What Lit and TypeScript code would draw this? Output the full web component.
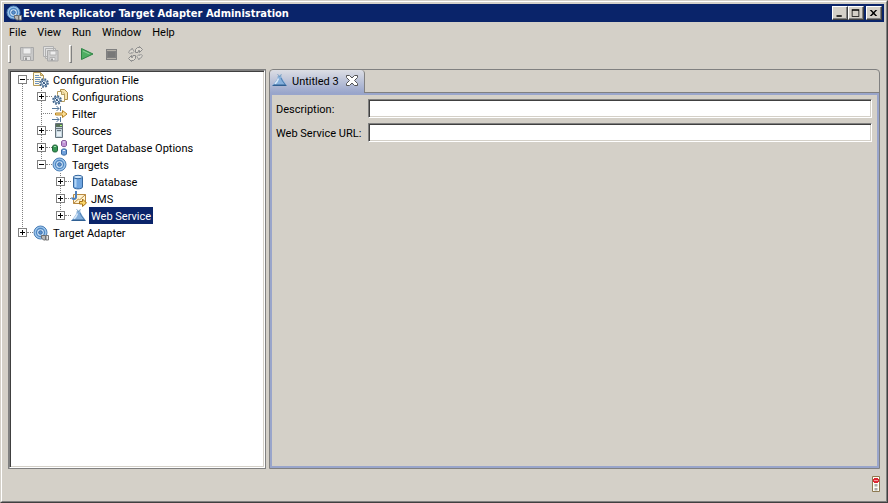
import { LitElement, html, css, svg } from 'lit';
import { customElement, state } from 'lit/decorators.js';
import { classMap } from 'lit/directives/class-map.js';

const target = svg`<circle cx="7.500" cy="7.500" r="6.500" fill="#9cc4ea" stroke="#4a7fb8"/><circle cx="7.500" cy="7.500" r="4" fill="#cfe4f8" stroke="#4d86c2" stroke-width="1.300"/><circle cx="7.500" cy="7.500" r="1.800" fill="#5b93cf" stroke="#3568a6"/>`;
const gear = svg`<g transform="translate(11 11)"><circle r="3.800" fill="#d5e4f2" stroke="#44668c" stroke-width="2" stroke-dasharray="1.700 1.280"/><circle r="2.800" fill="#e6f0f8" stroke="#6787a8"/><path d="M-2.500 -2.500L2.500 2.500M-1.500 1.500L1 -1.500" stroke="#2f5480"/></g>`;
const plug = svg`<path d="M8.500 10.500h4v4.500h-2l-2-2z" fill="#b8b8b8" stroke="#6c6c6c"/><path d="M13 10.500h2.500v4.500H13z" fill="#e4e4e4" stroke="#777"/>`;
const bell = svg`<path d="M5.500 1.500l2 1.500 2-1.500M5.500 4l4-1" fill="none" stroke="#6f9cc4"/><path d="M6 4h3.500l1.500 3 2.500 3.500 1.500 2.500H0L2 10.500 4.500 7z" fill="#86b0dc"/><path d="M6.500 5.500L5 8.500 3 11" fill="none" stroke="#d8e8f8" stroke-width="1.500"/><path d="M9 5l1.500 3 3 4" fill="none" stroke="#4c7db0"/><path d="M0 13l2-1.500h11l2 1.500z" fill="#2f5f92"/>`;

const icons: Record<string, unknown> = {
  app: svg`${target}${plug}`,
  adapter: svg`${target}${plug}`,
  target,
  bell,
  config: svg`<path d="M.5 .5h7l3 3v10H.5z" fill="#fffbe8" stroke="#b39a5c"/><path d="M7.500 .5v3h3z" fill="#f3d684" stroke="#b39a5c"/><path d="M2 3.500h4M2 5.500h6M2 7.500h5M2 9.500h4M2 11.500h4" stroke="#6d92bd"/>${gear}`,
  configs: svg`<path d="M8.500 .5h4l3 3v7h-7z" fill="#f8e4a8" stroke="#a98a48"/><path d="M5.500 5.500v-3h4.500l2.500 2.500v7.500h-7z" fill="#fffdf0" stroke="#b39a5c"/><path d="M9.500 2.500v3h3" fill="#f8e4a8" stroke="#b39a5c"/><g transform="translate(-6 0)">${gear}</g>`,
  filter: svg`<path d="M0 2.500h7M4.500 0l2.500 2.500L4.500 5M8.500 0v5M0 13.500h7M4.500 11l2.500 2.500L4.500 16M8.500 11v5" fill="none" stroke="#56789b"/><path d="M3.500 7h7V4.500L15 8l-4.500 3.500V9h-7z" fill="#fbe09a" stroke="#b98522"/>`,
  server: svg`<path d="M3.500 .5h7v14h-7z" fill="#c5d5de" stroke="#66737c"/><path d="M4 1h6v3H4z" fill="#587058"/><path d="M8 2h2v1H8z" fill="#a5f37c"/><path d="M4 5.500h6M5 7.500h4" stroke="#66737c"/><path d="M5 9h4v4H5z" fill="#e8f0f5"/>`,
  options: svg`<path d="M.5 6.500c0-2 5-2 5 0v4c0 2-5 2-5 0z" fill="#379554" stroke="#22643a"/><path d="M9.500 1.500c0-1.500 5-1.500 5 0v4c0 1.500-5 1.500-5 0z" fill="#c293d5" stroke="#855b9b"/><path d="M9.500 10c0-1.500 5-1.500 5 0v4c0 1.500-5 1.500-5 0z" fill="#6fa1dc" stroke="#3a689f"/><path d="M2 6.500h2" stroke="#a8e0b6"/><path d="M11 2h2M11 10.500h2" stroke="#e6ecfa"/>`,
  database: svg`<path d="M2.500 3v10c0 2.500 9 2.500 9 0V3z" fill="#6fa5e0" stroke="#35679f"/><path d="M4.500 5v8" stroke="#b4d5f5" stroke-width="2"/><ellipse cx="7" cy="3" rx="4.500" ry="1.700" fill="#cde3f8" stroke="#35679f"/>`,
  jms: svg`<path d="M2.500 3.500h12v9h-12z" fill="#fff3d2" stroke="#b98a42"/><path d="M2.500 12.500l5-4.500 1 1 6-5.500" fill="none" stroke="#b98a42"/><path d="M5 0v6c0 2.500-4 2.500-4 .500" fill="none" stroke="#4d7fbd" stroke-width="2"/><path d="M8.500 10.500h3v-2.500l4 4-4 3.500v-2.500h-3z" fill="#fbd769" stroke="#a87318"/>`,
  save: svg`<path d="M1.500 1.500h13v13h-12l-1-1z" fill="#c8c8c8" stroke="#a8a8a8"/><path d="M4 2h8v6H4z" fill="#eee" stroke="#b8b8b8"/><path d="M4.500 10.500h7v4h-7z" fill="#e4e4e4" stroke="#aaa"/><path d="M6 11.500h2v2.500H6z" fill="#999"/>`,
  saveAll: svg`<path d="M.5 .5h10v10H.5zM2.500 2.500h10v10h-10z" fill="#e0e0e0" stroke="#b0b0b0"/><path d="M4.500 4.500h10.500v10.500H4.500z" fill="#ccc" stroke="#aaa"/><path d="M7 5h6v4H7zM7 11.500h5v3H7z" fill="#eee" stroke="#b4b4b4"/><path d="M8 12.500h2v2H8z" fill="#999"/>`,
  run: svg`<path d="M1.500 2.500L13 8 1.500 13.500z" fill="#4fae62" stroke="#2f8546"/><path d="M3 5l6.500 3" stroke="#8fd199"/>`,
  stop: svg`<path d="M2 3h11v11H2z" fill="#808080"/><path d="M3 4.500h9M3 12.500h9" stroke="#b4b0a8"/><path d="M4 6h7v5H4z" fill="#787878"/>`,
  refresh: svg`<path d="M7.500 6.500v-3l2-2h2V.5l3 3-3 3V4.500h-1l-.5 2zM7.500 9.500v3l-2 2h-2V15.500l-3-3 3-3V11.500h1l.5-2z" fill="#dedad2" stroke="#8a8a8a"/><path d="M9 10.500l2-2v1l2-1 1.500 1-1.500 2.500-2 .5v1.500zM6 5.500l-2 2v-1l-2 1-1.500-1L2 4l2-.5V2z" fill="#dedad2" stroke="#9a9a9a"/>`,
  close: svg`<path d="M2.500 2.500h3l2.500 2.500 2.500-2.500h3v2L10.500 7.500l3 3v2h-3L8 10l-2.500 2.500h-3v-2l3-3-3-3z" fill="#fff" stroke="#555"/>`,
  light: svg`<path d="M4.500 .5h7v15h-7z" fill="#fffef4" stroke="#8d7951"/><path d="M6 2h4v1h1v3h-1v1H6V6H5V3h1z" fill="#dd2835"/><path d="M6 4.500h4" stroke="#f69696"/><path d="M6.500 8h3v2.500h-3zM6.500 12h3v2.500h-3z" fill="#aaa"/>`,
  min: svg`<path d="M4 11h7v2H4z"/>`,
  max: svg`<path d="M3 3h10v10H3zM4 5v7h8V5z" fill-rule="evenodd"/>`,
  exit: svg`<path d="M3 4h2.500L8 6.500 10.500 4H13L9.300 8 13 12h-2.500L8 9.500 5.500 12H3l3.700-4z"/>`,
};
const icon = (n: string) => html`<svg class="icon" viewBox="0 0 16 16" width="16" height="16" aria-hidden="true">${icons[n]}</svg>`;

interface Node { label: string; icon: string; leaf?: boolean; children?: Node[] }
const tree: Node[] = [
  { label: 'Configuration File', icon: 'config', children: [
    { label: 'Configurations', icon: 'configs' },
    { label: 'Filter', icon: 'filter', leaf: true },
    { label: 'Sources', icon: 'server' },
    { label: 'Target Database Options', icon: 'options' },
    { label: 'Targets', icon: 'target', children: [
      { label: 'Database', icon: 'database' },
      { label: 'JMS', icon: 'jms' },
      { label: 'Web Service', icon: 'bell' },
    ] },
  ] },
  { label: 'Target Adapter', icon: 'adapter' },
];

@customElement('app-root')
export class AppRoot extends LitElement {
  @state() private selected = 'Web Service';

  static styles = css`
    :host { display: block; height: 100vh; font: 11px/19px Roboto, sans-serif; color: #000; }
    * { box-sizing: border-box; }
    button, input { font: inherit; color: inherit; margin: 0; padding: 0; border: 0; background: none; border-radius: 0; }
    .icon { display: block; flex: none; }
    .window { height: 100%; display: flex; flex-direction: column; background: #d4d0c8; border: 1px solid; border-color: #d4d0c8 #404040 #404040 #d4d0c8; }
    .frame { flex: 1; min-height: 0; display: flex; flex-direction: column; border: 1px solid; border-color: #fff #808080 #808080 #fff; padding: 2px; }
    .title { display: flex; align-items: center; height: 18px; flex: none; background: #0a246a; color: #fff; padding: 0 2px; }
    h1 { flex: 1; margin: 0 0 0 1px; font: 700 11px/17px "DejaVu Sans Condensed", "Noto Sans", sans-serif; white-space: nowrap; }
    .caption { width: 16px; height: 14px; background: #d4d0c8; border: 1px solid; border-color: #fff #404040 #404040 #fff; box-shadow: inset -1px -1px #808080; overflow: hidden; display: flex; }
    .caption .icon { width: 13px; height: 12px; }
    .exit { margin-left: 2px; }
    .menu { display: flex; gap: 11px; padding: 1px 5px 0; height: 20px; flex: none; }
    .menu button { height: 19px; }
    .tools { display: flex; align-items: center; height: 24px; flex: none; padding: 0 4px; }
    .grip { width: 3px; height: 18px; border: 1px solid; border-color: #fff #808080 #808080 #fff; margin-right: 8px; }
    .tools button { margin-right: 8px; }
    .tools button + .grip { margin-left: 2px; }
    .body { flex: 1; min-height: 0; display: flex; gap: 3px; padding: 3px 4px 0; }
    .side { flex: 0 0 258px; border: 1px solid #808080; display: flex; }
    .tree { flex: 1; background: #fff; border: 1px solid; border-color: #808080 #fff #fff #808080; box-shadow: inset 1px 1px #404040, inset -1px -1px #d4d0c8; padding: 0 8px; }
    ul { list-style: none; margin: 0; padding: 0; }
    ul ul { margin-left: 19px; }
    li { position: relative; }
    li:not(:last-child)::before { content: ""; position: absolute; left: 4px; top: 9px; bottom: -9px; border-left: 1px dotted #808080; }
    ul ul > li::after { content: ""; position: absolute; left: 4px; top: 0; height: 9px; border-left: 1px dotted #808080; }
    .row { display: flex; align-items: center; height: 17px; }
    .twist { position: relative; z-index: 1; width: 9px; height: 9px; flex: none; border: 1px solid #808080; background: #fff linear-gradient(#000, #000) center / 5px 1px no-repeat; }
    .plus { background: linear-gradient(#000, #000) center / 5px 1px no-repeat, linear-gradient(#000, #000) center / 1px 5px no-repeat, #fff; }
    .dots { width: 6px; border-top: 1px dotted #808080; flex: none; }
    .leaf { width: 11px; margin-left: 4px; }
    .label { margin-left: 2px; padding: 0 2px; white-space: nowrap; height: 17px; padding-top: 1px; line-height: 17px; }
    .picked { background: #0a246a; color: #fff; }
    .editor { flex: 1; min-width: 0; display: flex; flex-direction: column; border: 1px solid #808080; border-radius: 4px 4px 0 0; }
    .tabs { height: 23px; flex: none; display: flex; border-bottom: 1px solid #808080; }
    .tab { display: flex; align-items: center; gap: 4px; width: 95px; height: 23px; padding: 0 4px 1px 2px; border-right: 1px solid #808080; border-radius: 4px 4px 0 0; background: linear-gradient(#dcdee4, #99a5cb); white-space: nowrap; }
    .tab button { margin-left: auto; }
    .form { flex: 1; border: 2px solid #99a5cb; padding: 4px 5px 4px 4px; display: grid; grid-template-columns: 87px 1fr; grid-auto-rows: 19px; gap: 5px; align-content: start; }
    .form label { white-space: nowrap; padding-top: 1px; }
    .form input { width: 100%; height: 19px; background: #fff; border: 1px solid; border-color: #808080 #fff #fff #808080; box-shadow: inset 1px 1px #404040, inset -1px -1px #d4d0c8; padding: 0 4px; outline: 0; }
    .status { height: 30px; flex: none; display: flex; align-items: center; justify-content: flex-end; }
  `;

  private node(n: Node): unknown {
    return html`<li role="treeitem">
      <div class="row">
        ${n.leaf ? html`<span class="dots leaf"></span>` : html`<button class=${classMap({ twist: true, plus: !n.children })} aria-label=${'Toggle ' + n.label}></button><span class="dots"></span>`}
        ${icon(n.icon)}
        <button class=${classMap({ label: true, picked: this.selected === n.label })} @click=${() => (this.selected = n.label)}>${n.label}</button>
      </div>
      ${n.children ? html`<ul role="group">${n.children.map((c) => this.node(c))}</ul>` : ''}
    </li>`;
  }

  render() {
    return html`<div class="window"><div class="frame">
      <header class="title">${icon('app')}<h1>Event Replicator Target Adapter Administration</h1>
        <button class="caption" aria-label="Minimize">${icon('min')}</button>
        <button class="caption" aria-label="Maximize">${icon('max')}</button>
        <button class="caption exit" aria-label="Close">${icon('exit')}</button>
      </header>
      <nav class="menu">${['File', 'View', 'Run', 'Window', 'Help'].map((m) => html`<button>${m}</button>`)}</nav>
      <div class="tools">
        <span class="grip"></span>
        <button aria-label="Save" disabled>${icon('save')}</button>
        <button aria-label="Save all" disabled>${icon('saveAll')}</button>
        <span class="grip"></span>
        <button aria-label="Run">${icon('run')}</button>
        <button aria-label="Stop" disabled>${icon('stop')}</button>
        <button aria-label="Refresh" disabled>${icon('refresh')}</button>
      </div>
      <main class="body">
        <section class="side"><ul class="tree" role="tree">${tree.map((n) => this.node(n))}</ul></section>
        <section class="editor">
          <div class="tabs"><div class="tab">${icon('bell')}<span>Untitled 3</span><button aria-label="Close tab">${icon('close')}</button></div></div>
          <form class="form">
            <label for="description">Description:</label><input id="description" type="text">
            <label for="url">Web Service URL:</label><input id="url" type="text">
          </form>
        </section>
      </main>
      <footer class="status">${icon('light')}</footer>
    </div></div>`;
  }
}
